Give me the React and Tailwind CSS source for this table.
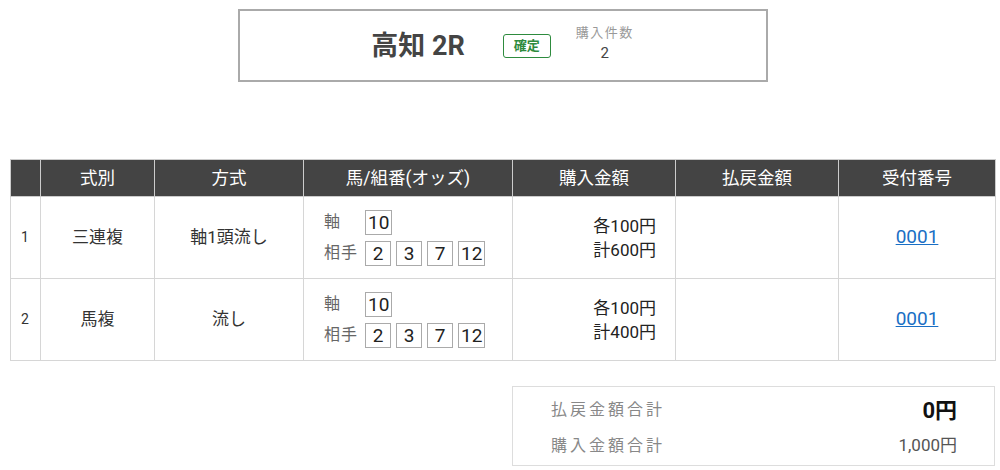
const rows = [
  {
    no: 1,
    type: "三連複",
    method: "軸1頭流し",
    axis: ["10"],
    partners: ["2", "3", "7", "12"],
    each: "各100円",
    total: "計600円",
    receipt: "0001",
  },
  {
    no: 2,
    type: "馬複",
    method: "流し",
    axis: ["10"],
    partners: ["2", "3", "7", "12"],
    each: "各100円",
    total: "計400円",
    receipt: "0001",
  },
];

function NumBox({ n }) {
  return (
    <span className="inline-flex h-[25px] min-w-[26px] items-center justify-center border border-[#aaa] px-[2px] text-[19px] leading-none text-[#222]">
      {n}
    </span>
  );
}

export default function App() {
  return (
    <div
      className="w-[1000px] h-[470px] bg-white pl-[10px] pr-[5px] pt-[9px] text-[#333]"
      style={{ fontFamily: '"Roboto", "Noto Sans CJK JP", sans-serif' }}
    >
      <div className="mx-auto flex h-[73px] w-[530px] items-center justify-center border-2 border-[#aaa]">
        <div className="mt-[2px] text-[27px] font-bold text-[#444]">高知 2R</div>
        <span className="ml-[38px] flex h-[24px] items-center rounded-[3px] border border-[#2e8b3e] px-[10px] text-[13px] font-bold text-[#2e8b3e]">
          確定
        </span>
        <div className="ml-[25px] -mt-[6px] flex flex-col items-center leading-[20px]">
          <span className="text-[13px] tracking-[1.5px] text-[#999]">購入件数</span>
          <span className="text-[15px] text-[#444]">2</span>
        </div>
      </div>

      <table className="mt-[77px] w-[985px] table-fixed border-collapse">
        <colgroup>
          <col className="w-[30px]" />
          <col className="w-[114px]" />
          <col className="w-[149px]" />
          <col className="w-[209px]" />
          <col className="w-[163px]" />
          <col className="w-[163px]" />
          <col className="w-[157px]" />
        </colgroup>
        <thead>
          <tr className="h-[37px] bg-[#444] text-[17.5px] text-white">
            <th className="border border-[#ccc] font-normal"></th>
            <th className="border border-[#ccc] font-normal">式別</th>
            <th className="border border-[#ccc] font-normal">方式</th>
            <th className="border border-[#ccc] font-normal">馬/組番(オッズ)</th>
            <th className="border border-[#ccc] font-normal">購入金額</th>
            <th className="border border-[#ccc] font-normal">払戻金額</th>
            <th className="border border-[#ccc] font-normal">受付番号</th>
          </tr>
        </thead>
        <tbody>
          {rows.map((r) => (
            <tr key={r.no} className="h-[82px] text-[17px]">
              <td className="border border-[#d6d6d6] pl-[10px] text-[14px] text-[#333]">
                {r.no}
              </td>
              <td className="border border-[#d6d6d6] text-center text-[#333]">{r.type}</td>
              <td className="border border-[#d6d6d6] text-center text-[#333]">{r.method}</td>
              <td className="border border-[#d6d6d6] pl-[20px]">
                <div className="flex flex-col gap-[6px]">
                  <div className="flex items-center">
                    <span className="w-[41px] text-[16px] text-[#666]">軸</span>
                    <div className="flex gap-[5px]">
                      {r.axis.map((n) => (
                        <NumBox key={n} n={n} />
                      ))}
                    </div>
                  </div>
                  <div className="flex items-center">
                    <span className="w-[41px] text-[16px] tracking-[1px] text-[#666]">相手</span>
                    <div className="flex gap-[5px]">
                      {r.partners.map((n) => (
                        <NumBox key={n} n={n} />
                      ))}
                    </div>
                  </div>
                </div>
              </td>
              <td className="border border-[#d6d6d6] pr-[19px] text-right leading-[24px] text-[#222]">
                <div>{r.each}</div>
                <div>{r.total}</div>
              </td>
              <td className="border border-[#d6d6d6]"></td>
              <td className="border border-[#d6d6d6] text-center">
                <a href="#" className="text-[19px] text-[#1a6fc4] underline">
                  {r.receipt}
                </a>
              </td>
            </tr>
          ))}
        </tbody>
      </table>

      <div className="ml-auto mt-[25px] flex h-[80px] w-[483px] flex-col justify-center gap-[6px] border border-[#ddd] pl-[38px] pr-[37px]">
        <div className="flex items-center justify-between">
          <span className="text-[16px] tracking-[3px] text-[#888]">払戻金額合計</span>
          <span className="text-[22px] font-bold text-[#111]">0円</span>
        </div>
        <div className="flex items-center justify-between">
          <span className="text-[16px] tracking-[3px] text-[#888]">購入金額合計</span>
          <span className="text-[17px] text-[#555]">1,000円</span>
        </div>
      </div>
    </div>
  );
}
